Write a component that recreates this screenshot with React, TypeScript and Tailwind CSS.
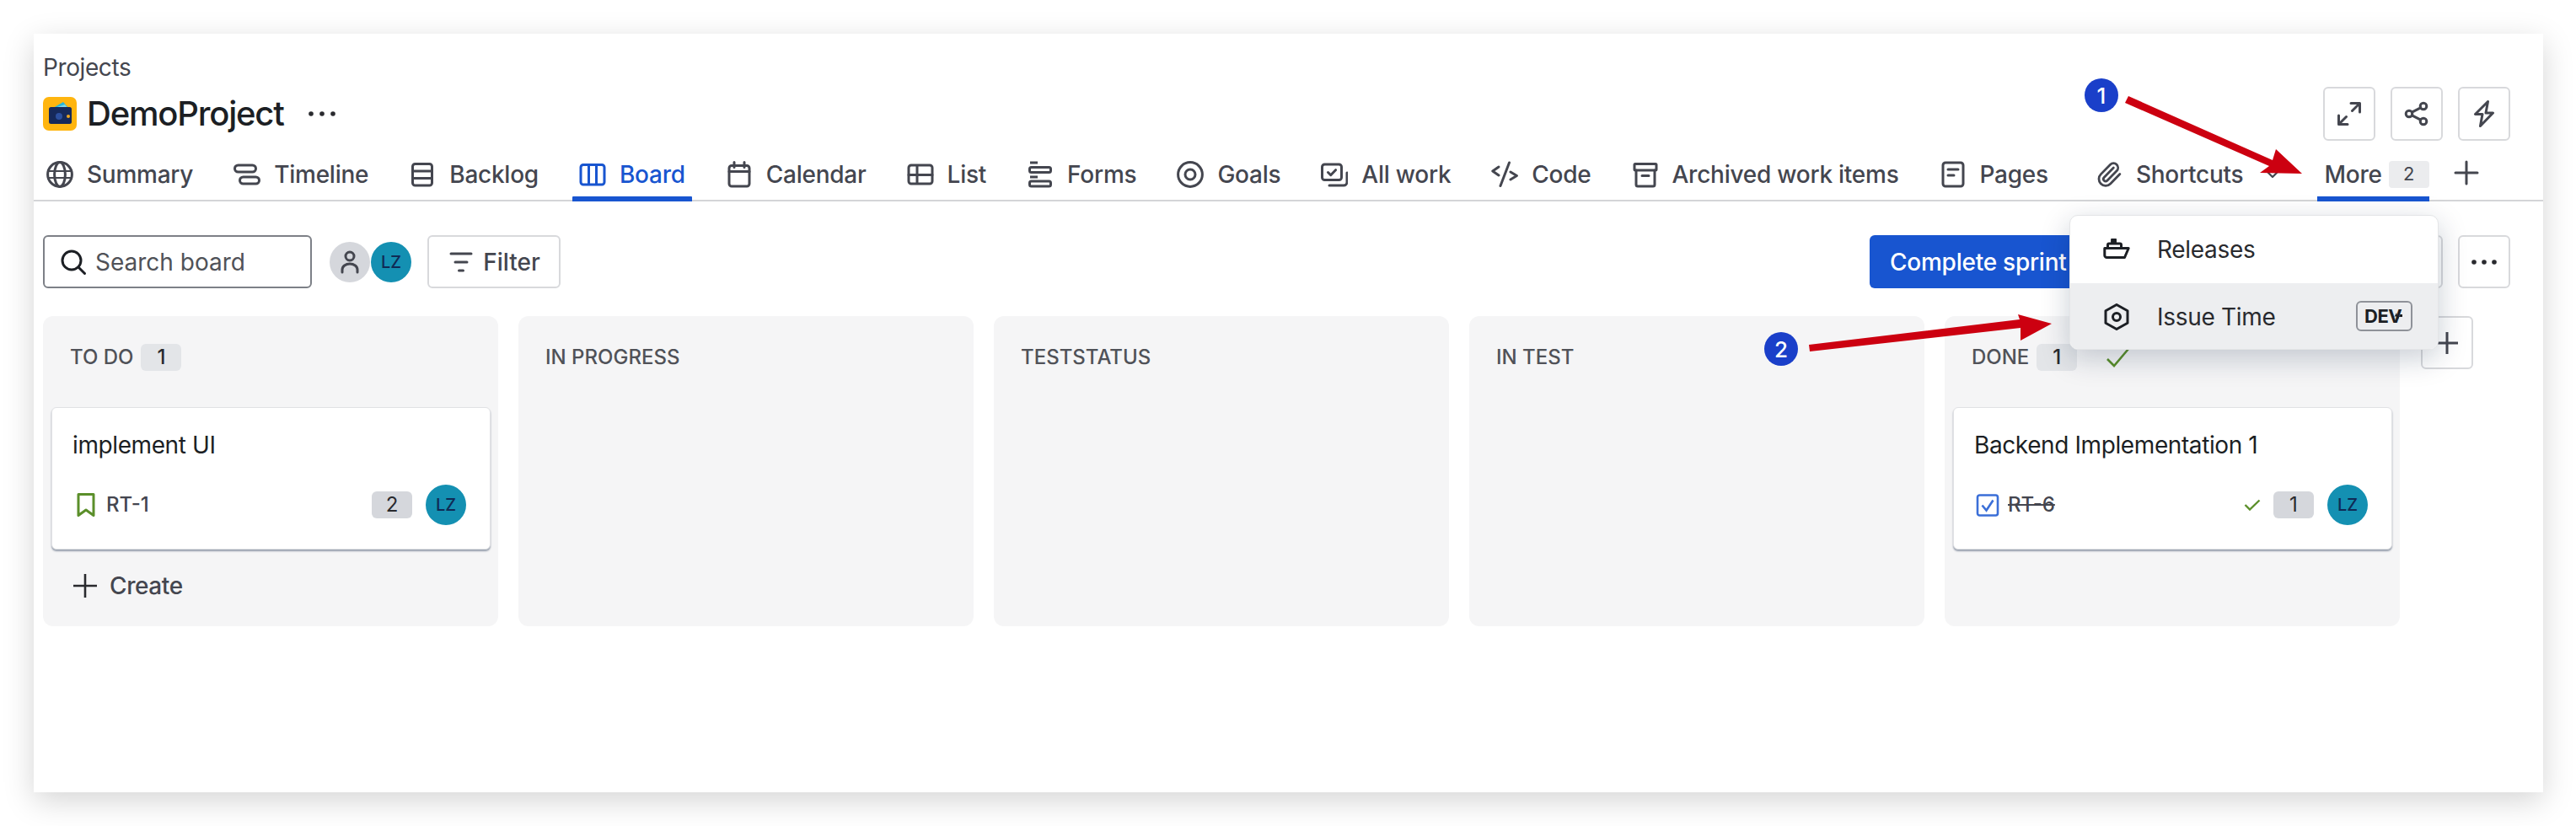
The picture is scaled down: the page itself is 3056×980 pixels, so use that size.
import React from "react";
import { Paperclip } from "lucide-react";

const I = ({ children, className = "text-[#44464f]", size = 32 }: { children: React.ReactNode; className?: string; size?: number }) => (
  <svg width={size} height={size} viewBox="0 0 16 16" fill="none" stroke="currentColor" strokeWidth="1.5" strokeLinecap="round" strokeLinejoin="round" className={"shrink-0 " + className}>
    {children}
  </svg>
);

const tabs: { label: string; icon: React.ReactNode; active?: boolean; chevron?: boolean }[] = [
  { label: "Summary", icon: <><circle cx="8" cy="8" r="7.2" /><ellipse cx="8" cy="8" rx="3.2" ry="7.2" /><path d="M1 6h14M1 10h14" strokeWidth="1.1" /></> },
  { label: "Timeline", icon: <><rect x=".75" y="2.5" width="12.5" height="4" rx="2" /><rect x="3.75" y="9.5" width="11.5" height="4" rx="2" /></> },
  { label: "Backlog", icon: <><rect x="2.25" y="1.75" width="11.5" height="12.75" rx="1.5" /><path d="M2.5 6h11M2.5 10.25h11" /></> },
  { label: "Board", active: true, icon: <><rect x="1" y="2.25" width="14" height="11.75" rx="1.5" /><path d="M5.75 2.5v11.25M10.25 2.5v11.25" /></> },
  { label: "Calendar", icon: <><rect x="2" y="2.75" width="12" height="12.25" rx="1.5" /><path d="M2 6.25h12M5 .75v3M11 .75v3" /></> },
  { label: "List", icon: <><rect x="1" y="2.5" width="14" height="11" rx="1.5" /><path d="M1 8.25h14M6 2.75v10.5" /></> },
  { label: "Forms", icon: <><path d="M2 1h4.5M2 9.5h4.5" strokeLinecap="butt" /><rect x="1.75" y="3.75" width="12.5" height="3" rx="1" /><rect x="1.75" y="12" width="12.5" height="3" rx="1" /></> },
  { label: "Goals", icon: <><circle cx="8" cy="8" r="7.2" /><circle cx="8" cy="8" r="3" /></> },
  { label: "All work", icon: <><rect x=".75" y="2" width="11.5" height="9.25" rx="1.5" /><path d="M4.25 6.75l1.6 1.6 2.9-3M5 14.5h8.5a2 2 0 0 0 2-2V7" /></> },
  { label: "Code", icon: <><path d="M4.5 3.5L.9 6l3.6 2.5M11.5 6.5l3.7 2.25L11.5 11M10.75 1L5.5 14.75" /></> },
  { label: "Archived work items", icon: <><rect x="1.5" y="1.75" width="13" height="3.75" rx=".5" /><path d="M2.5 5.5v8.5a1 1 0 0 0 1 1h9a1 1 0 0 0 1-1V5.5M6 8.75h4" /></> },
  { label: "Pages", icon: <><rect x="2" y="1" width="12" height="14" rx="1.5" /><path d="M5 5h6M5 8.5h3.5" /></> },
  { label: "Shortcuts", chevron: true, icon: null },
];

const Tab = ({ label, icon, active, chevron }: { label: string; icon: React.ReactNode; active?: boolean; chevron?: boolean }) => (
  <div className={"relative flex h-[64px] items-center gap-4 px-2 pt-[3px] " + (active ? "text-[#1855d0]" : "text-[#44464f]") + (chevron ? " ml-[8px]" : "")}>
    {chevron ? (
      <Paperclip size={32} strokeWidth={2.1} className="shrink-0 text-[#44464f]" />
    ) : (
      <I className={active ? "text-[#1855d0]" : "text-[#44464f]"}>{icon}</I>
    )}
    <span className="text-[28px] leading-9 font-medium tracking-[-0.25px] whitespace-nowrap">{label}</span>
    {chevron && (
      <I className="ml-[7px] text-[#44464f]" size={24}><path d="M4 6l4 4 4-4" /></I>
    )}
    {active && <span className="absolute right-0 bottom-[-2px] left-0 h-[6px] rounded-t-[1px] bg-[#1855d0]" />}
  </div>
);

const Lz = () => (
  <div className="flex h-12 w-12 shrink-0 items-center justify-center rounded-full bg-[#1490b2] text-[20px] font-medium text-[#0f2a55]">LZ</div>
);

const Count = ({ n, light }: { n: number; light?: boolean }) => (
  <span className={"flex h-8 w-12 shrink-0 items-center justify-center rounded-[6px] text-[24px] text-[#292a2e] " + (light ? "bg-[#e3e5e8]" : "bg-[#d5d7dc]")}>{n}</span>
);

const OutlineBtn = ({ children, className = "" }: { children?: React.ReactNode; className?: string }) => (
  <div className={"flex items-center justify-center rounded-[6px] border-2 border-[#d8d9dc] bg-white " + className}>{children}</div>
);

const Card = ({ title, children }: { title: string; children: React.ReactNode }) => (
  <div className="mt-[44px] ml-[10px] h-[169px] w-[521px] rounded-[6px] border border-[#e0e1e4] bg-white px-[24px] pt-[26px] shadow-[0_2px_2px_rgba(9,30,66,0.4)]">
    <div className="text-[28px] leading-9 tracking-[-0.4px] text-[#1c1f24]">{title}</div>
    <div className="mt-[29px] flex h-12 items-center">{children}</div>
  </div>
);

const Column = ({ title, children, badge, extra }: { title: string; children?: React.ReactNode; badge?: number; extra?: React.ReactNode }) => (
  <div className="h-[368px] w-[540px] shrink-0 overflow-hidden rounded-[12px] bg-[#f5f5f6]">
    <div className="mt-[32px] flex h-8 items-center pt-[1px] pl-[32px] text-[24px] font-medium text-[#505258]">
      <span className="mr-[9px] whitespace-nowrap">{title}</span>
      {badge !== undefined && <Count n={badge} light />}
      {extra}
    </div>
    {children}
  </div>
);

export default function App() {
  return (
    <div className="relative h-[980px] w-[3056px] overflow-hidden bg-white pt-[40px] pl-[40px] [font-family:Inter,sans-serif]">
      <div className="h-[900px] w-[2977px] bg-white shadow-[0_10px_34px_rgba(0,0,0,0.17)]">
        {/* header */}
        <div className="flex justify-between pr-[39px] pl-[11px]">
          <div className="pt-[22px]">
            <div className="text-[28px] leading-9 tracking-[-0.4px] text-[#44464f]">Projects</div>
            <div className="mt-[17px] flex h-10 items-center">
              <svg width="40" height="40" viewBox="0 0 40 40" className="shrink-0">
                <rect width="40" height="40" rx="7" fill="#ffb50f" />
                <path d="M12 13 L24 6 L31 14 Z" fill="#29b6d8" />
                <path d="M17 12 L26 9 L30 14 Z" fill="#7fd6ea" />
                <rect x="7" y="12" width="27" height="20" rx="2.5" fill="#16295a" />
                <circle cx="19" cy="23" r="4" fill="#2c4f9e" />
                <circle cx="30" cy="23" r="2" fill="#f0a820" />
              </svg>
              <span className="ml-3 text-[40px] leading-10 font-medium tracking-[-1.2px] text-[#1c1f24]">DemoProject</span>
              <svg width="32" height="8" viewBox="0 0 32 8" className="ml-[29px] text-[#292a2e]" fill="currentColor">
                <circle cx="3" cy="4" r="2.8" /><circle cx="16" cy="4" r="2.8" /><circle cx="29" cy="4" r="2.8" />
              </svg>
            </div>
          </div>
          <div className="flex gap-[18px] pt-[63px]">
            <OutlineBtn className="h-16 w-[62px]">
              <I><path d="M9 1.75h5.25V7M14 2L9.75 6.25M7 14.25H1.75V9M2 14l4.25-4.25" /></I>
            </OutlineBtn>
            <OutlineBtn className="h-16 w-[62px]">
              <I><circle cx="12" cy="3.5" r="1.9" /><circle cx="12" cy="12.5" r="1.9" /><circle cx="3.5" cy="8" r="1.9" /><path d="M5.2 7.1l5.1-2.7M5.2 8.9l5.1 2.7" /></I>
            </OutlineBtn>
            <OutlineBtn className="h-16 w-[62px]">
              <I><path d="M10.25.75L2.75 8.25H7L5.75 15.25l7.5-7.75H9z" /></I>
            </OutlineBtn>
          </div>
        </div>

        {/* tabs */}
        <div className="mt-[6px] flex h-[66px] items-center gap-8 border-b-2 border-[#d4d5d7] pl-[7px]">
          {tabs.map((t) => (
            <Tab key={t.label} {...t} />
          ))}
          <div className="relative ml-[1px] flex h-[64px] items-center gap-2 pt-[3px] pl-2 text-[28px] font-medium tracking-[-0.25px] text-[#44464f]">
            <span>More</span>
            <span className="flex h-8 w-12 items-center justify-center rounded-[4px] bg-[#ebecee] text-[22px] font-normal">2</span>
            <span className="absolute right-0 bottom-[-2px] left-0 h-[6px] bg-[#1855d0]" />
          </div>
          <I className="-ml-[4px] text-[#44464f]">
            <path d="M8 1.5v13M1.5 8h13" />
          </I>
        </div>

        {/* toolbar */}
        <div className="mt-[40px] flex h-[63px] items-center pr-[39px] pl-[11px]">
          <div className="flex h-full w-[319px] items-center gap-[10px] rounded-[6px] border-2 border-[#7d8087] pl-[18px]">
            <I className="text-[#1c1f24]"><circle cx="7" cy="7" r="5.5" /><path d="M11 11l3.75 3.75" /></I>
            <span className="text-[28px] leading-9 text-[#505258]">Search board</span>
          </div>
          <div className="ml-[21px] flex gap-[1px]">
            <div className="flex h-12 w-12 items-center justify-center rounded-full bg-[#d5d7dc]">
              <I size={32}><circle cx="8" cy="4.5" r="2.5" /><path d="M3.5 14V12.5a4.5 3.5 0 0 1 9 0V14" /></I>
            </div>
            <Lz />
          </div>
          <OutlineBtn className="ml-[19px] h-full w-[158px] gap-[10px]">
            <I><path d="M2 3h12M4.5 8h7M6.75 13h2.5" /></I>
            <span className="text-[28px] leading-9 font-medium text-[#44464f]">Filter</span>
          </OutlineBtn>
          <div className="ml-auto flex h-full gap-[18px]">
            <div className="flex w-[260px] items-center rounded-[6px] bg-[#1855d0] pl-[24px] text-[28px] font-medium tracking-[-0.25px] whitespace-nowrap text-white">Complete sprint</div>
            <OutlineBtn className="w-[402px]" />
            <OutlineBtn className="w-[62px]">
              <svg width="32" height="8" viewBox="0 0 32 8" className="text-[#292a2e]" fill="currentColor">
                <circle cx="4" cy="4" r="2.8" /><circle cx="16" cy="4" r="2.8" /><circle cx="28" cy="4" r="2.8" />
              </svg>
            </OutlineBtn>
          </div>
        </div>

        {/* board */}
        <div className="mt-[33px] flex items-start gap-6 pl-[11px]">
          <Column title="TO DO" badge={1}>
            <Card title="implement UI">
              <I className="text-[#5b8f2a]" size={32}><path d="M3.5 1.75h9v12.5L8 11l-4.5 3.25z" /></I>
              <span className="ml-[8px] text-[24px] font-medium text-[#44464f]">RT-1</span>
              <div className="mr-[16px] ml-auto"><Count n={2} /></div>
              <Lz />
              <div className="w-[4px]" />
            </Card>
            <div className="mt-[29px] ml-[36px] flex h-[28px] items-center gap-[15px] text-[28px] font-medium tracking-[-0.4px] text-[#44464f]">
              <svg width="28" height="28" viewBox="0 0 28 28" fill="none" stroke="#292a2e" strokeWidth="2.6"><path d="M14 0v28M0 14h28" /></svg>
              <span>Create</span>
            </div>
          </Column>
          <Column title="IN PROGRESS" />
          <Column title="TESTSTATUS" />
          <Column title="IN TEST" />
          <Column
            title="DONE"
            badge={1}
            extra={
              <svg width="30" height="24" viewBox="0 0 30 24" fill="none" stroke="#5b8f2a" strokeWidth="2.6" className="ml-[34px]"><path d="M2 14l8 8L27 2" /></svg>
            }
          >
            <Card title="Backend Implementation 1">
              <svg width="32" height="32" viewBox="0 0 32 32" fill="none" className="shrink-0">
                <rect x="4" y="4.5" width="24" height="24" rx="2.5" stroke="#3b6fd8" strokeWidth="2.6" />
                <path d="M9.5 16.5l5 6 8-12" stroke="#3b6fd8" strokeWidth="2.6" />
              </svg>
              <span className="ml-[8px] text-[24px] font-medium text-[#44464f] line-through">RT-6</span>
              <svg width="20" height="14" viewBox="0 0 20 14" fill="none" stroke="#5b8f2a" strokeWidth="2.4" className="mr-[15px] ml-auto"><path d="M1.5 7l5.5 5.5L18.5 1.5" /></svg>
              <div className="mr-[16px]"><Count n={1} /></div>
              <Lz />
              <div className="w-[4px]" />
            </Card>
          </Column>
          <OutlineBtn className="ml-[1px] h-[63px] w-[62px]">
            <I><path d="M8 1.5v13M1.5 8h13" strokeLinecap="butt" /></I>
          </OutlineBtn>
        </div>
      </div>

      {/* menu and callouts laid over the page */}
      <div className="absolute top-[255px] left-[2455px] h-[160px] w-[438px] overflow-hidden rounded-[10px] border border-[#e4e5e7] bg-white shadow-[0_10px_34px_rgba(9,30,66,0.22)]">
        <div className="flex h-[80px] items-center gap-[32px] pl-[39px] text-[28px] tracking-[-0.3px] text-[#292a2e]">
          <I className="text-[#1c1f24]"><path d="M.9 7.25h14.2L12.75 12.75H2.2a1.3 1.3 0 0 1-1.3-1.3zM2.75 7V5.25a.75.75 0 0 1 .75-.75h6.5a.75.75 0 0 1 .75.75V7" /><rect x="5" y="1.75" width="2.75" height="2.5" fill="currentColor" strokeWidth=".5" /></I>
          <span>Releases</span>
        </div>
        <div className="relative flex h-[80px] items-center gap-[32px] bg-[#edeef0] pl-[39px] text-[28px] tracking-[-0.3px] text-[#292a2e]">
          <I className="text-[#1c1f24]"><path d="M8 .75l6.5 3.65v7.2L8 15.25l-6.5-3.65V4.4z" /><circle cx="8" cy="8" r="2.25" /></I>
          <span>Issue Time</span>
          <div className="absolute top-[21px] left-[339px] flex h-9 w-[67px] items-center rounded-[6px] border-2 border-[#8f9299] pl-[8px] text-[22px] font-bold tracking-[-0.5px] text-[#1c1f24]">
            <span>DEV</span>
            <svg width="12" height="12" viewBox="0 0 12 12" className="-ml-[11px]" fill="#1c1f24"><path d="M0 6h3l2-4 2 8 2-6h3v3H9z" /></svg>
          </div>
        </div>
      </div>

      <svg width="3056" height="980" viewBox="0 0 3056 980" className="pointer-events-none absolute top-0 left-0">
        <path d="M2525 114 L2696 190 L2700 177 L2731 206 L2681 205 L2692 197 L2521 122 Z" fill="#cc0010" />
        <path d="M2146 409 L2396 379 L2394 373 L2434 384 L2397 404 L2397 389 L2147 417 Z" fill="#cc0010" />
      </svg>
      <div className="absolute top-[93px] left-[2473px] flex h-10 w-10 items-center justify-center rounded-full bg-[#1a3fc9] text-[26px] font-medium text-white">1</div>
      <div className="absolute top-[394px] left-[2093px] flex h-10 w-10 items-center justify-center rounded-full bg-[#1a3fc9] text-[26px] font-medium text-white">2</div>
    </div>
  );
}
